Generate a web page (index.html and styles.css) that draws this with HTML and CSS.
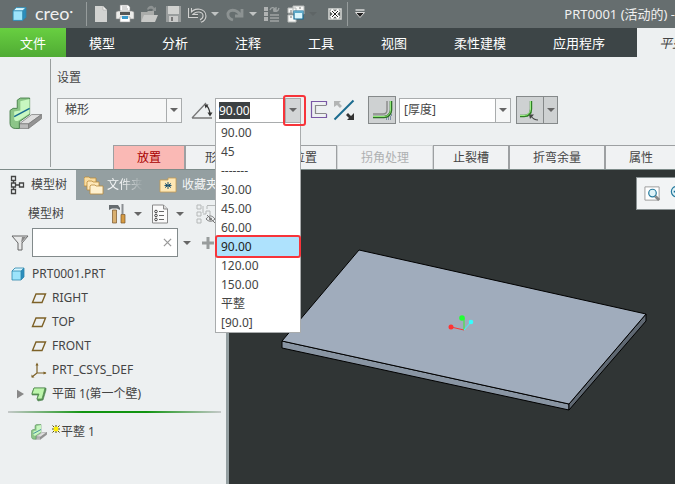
FILE: index.html
```html
<!DOCTYPE html>
<html lang="zh-CN">
<head>
    <meta charset="UTF-8">
    <meta name="viewport" content="width=device-width, initial-scale=1.0">
    <title>PRT0001 (活动的)</title>
    <link rel="stylesheet" href="styles.css">
</head>
<body>
    <!-- shared symbols -->
    <svg class="symbols" aria-hidden="true">
        <symbol id="caret" viewBox="0 0 8 4"><path d="M0 0h8L4 4z" fill="currentColor"/></symbol>
        <symbol id="cube" viewBox="0 0 14 14">
            <path d="M1 4l3-3h9v9l-3 3H1z" fill="#2c8ebd"/>
            <path d="M1 4l3-3h9l-3 3z" fill="#d5f6ff"/>
            <path d="M1 4h9v9H1z" fill="#9ce4fb"/>
            <path d="M1 4l3-3h9v9l-3 3H1zM1 4h9v9M10 4l3-3" fill="none" stroke="#2c86ad" stroke-width=".8"/>
        </symbol>
        <symbol id="plane" viewBox="0 0 16 12"><path d="M5 2h9.500L11 10.500H1.500z" fill="none" stroke="#7d6127" stroke-width="1.400"/></symbol>
        <symbol id="flatwall" viewBox="0 0 32 32">
            <path d="M10 26L22 17h9.500L19 26z" fill="#dedede" stroke="#777" stroke-width=".7"/>
            <path d="M10 26h9v4.500h-9z" fill="#bbb" stroke="#777" stroke-width=".7"/>
            <path d="M19 26l12.500-9v4L19 30.500z" fill="#939393" stroke="#777" stroke-width=".7"/>
            <path d="M1 13l3-2h4V3l3-2h9v16l-10 7v6.500H6c-3 0-5-2-5-5z" fill="#8cc588" stroke="#46804a" stroke-width=".9"/>
            <path d="M5 14l6-1V4l9-2v14L9 23c-2 1-4 0-4-2z" fill="#c8f7c0"/>
            <path d="M5 19l15-8" stroke="#166c91" stroke-width="1.500"/>
        </symbol>
    </svg>

    <header class="titlebar">
        <svg class="logo" viewBox="0 0 14 14"><use href="#cube"/></svg>
        <span class="brand">creo<sup>•</sup></span>
        <div class="quick-access">
            <button class="tool" aria-label="新建">
                <svg viewBox="0 0 20 20"><path d="M4 2h8l4 4v12H4z" fill="#d2d3d1"/><path d="M12 2v4h4z" fill="#f4f4f2" stroke="#aaa" stroke-width=".6"/></svg>
            </button>
            <button class="tool" aria-label="打印">
                <svg viewBox="0 0 20 20"><path d="M5 1h8l2 2v5H5z" fill="#fff" stroke="#888" stroke-width=".6"/><path d="M7 3h5M7 5h6" stroke="#999" stroke-width=".8"/><path d="M1 8l2-1h14l2 1v7H1z" fill="#ececea" stroke="#888" stroke-width=".6"/><path d="M5 8h10v3H5z" fill="#555"/><path d="M5 13h10v5H5z" fill="#fff" stroke="#999" stroke-width=".6"/><path d="M7 12h6v3H7z" fill="#3a99cc"/></svg>
            </button>
            <button class="tool" aria-label="打开">
                <svg viewBox="0 0 20 20"><path d="M2 8h6l1-1h6v10H2z" fill="#aaacaa"/><path d="M5 11h14l-3 7H2z" fill="#c8c9c7"/><path d="M8 5c2-4 6-4 7-1l2-1v4h-4l1-1c-1-2-4-1-5 0z" fill="#8d9292"/></svg>
            </button>
            <button class="tool" aria-label="保存">
                <svg viewBox="0 0 20 20"><path d="M3 2h15v16H3z" fill="#999d9d"/><path d="M5 2h11v8H5z" fill="#d0d1cf"/><path d="M6 12h9v6H6z" fill="#c8c9c8"/><path d="M8 13h2v4H8z" fill="#777"/></svg>
            </button>
            <button class="tool" aria-label="撤消">
                <svg viewBox="0 0 20 20"><path d="M3 4v8h8M3.500 11c5-7 14-5 14 1 0 2-1.500 4-4 5" fill="none" stroke="#d0d1d0" stroke-width="4"/><path d="M3 4v8h8M3.500 11c5-7 14-5 14 1 0 2-1.500 4-4 5" fill="none" stroke="#5d6464" stroke-width="1.800"/></svg>
            </button>
            <button class="tool-caret" aria-label="撤消列表"><svg class="caret"><use href="#caret"/></svg></button>
            <button class="tool tool-redo" aria-label="重做">
                <svg viewBox="0 0 20 20"><path d="M17 5v7h-7M16 12C12 4 2 5 3 11c0 3 2 4 5 5" fill="none" stroke="#8c9292" stroke-width="2.800"/></svg>
            </button>
            <button class="tool-caret" aria-label="重做列表"><svg class="caret"><use href="#caret"/></svg></button>
            <button class="tool" aria-label="重新生成">
                <svg viewBox="0 0 20 20"><path d="M3 3h4v4H3zM3 8h4v4H3zM3 13h4v4H3z" fill="#b0b3b3"/><path d="M9 11h9M9 14h9M9 17h9" stroke="#a0a4a4" stroke-width="1.300"/><path d="M9 6c1-3 4-3 5-1M18 4c-1 4-4 4-5 2M12 6h3V3M15 5h-2v3" fill="none" stroke="#9da2a2" stroke-width="1.300"/></svg>
            </button>
            <button class="tool" aria-label="窗口">
                <svg viewBox="0 0 20 20"><path d="M8 2h11v8H8zM3 4h8v5H3zM3 11h8v7H3z" fill="#f6f7f5" stroke="#b6b9b8"/><path d="M6 6v3M14 4h2M5 13h2" stroke="#777"/><path d="M9 7h9v8H9z" fill="#d9f5fc" stroke="#176c95" stroke-width="1.200"/><path d="M9 7h9v2H9z" fill="#5ba9c9"/></svg>
            </button>
            <button class="tool-caret tool-caret-dim" aria-label="窗口列表"><svg class="caret"><use href="#caret"/></svg></button>
            <button class="tool tool-close" aria-label="关闭">
                <svg viewBox="0 0 20 20"><path d="M4 5h12v10H4z" fill="#555b5b" stroke="#d8dad8" stroke-width="1.500"/><path d="M6 6l8 8M14 6l-8 8" stroke="#fff" stroke-width="3.400"/><path d="M7 7l6 6M13 7l-6 6" stroke="#222" stroke-width="1"/></svg>
            </button>
        </div>
        <button class="tool" aria-label="自定义">
            <svg viewBox="0 0 20 20"><path d="M5.500 6h9" stroke="#eee" stroke-width="1.200"/><path d="M5.500 8.500h9L10 13.500z" fill="#222" stroke="#ddd"/></svg>
        </button>
        <span class="doc-title">PRT0001 (活动的) -</span>
    </header>

    <nav class="menu">
        <a class="menu-file" href="#">文件</a>
        <a href="#">模型</a>
        <a href="#">分析</a>
        <a href="#">注释</a>
        <a href="#">工具</a>
        <a href="#">视图</a>
        <a href="#">柔性建模</a>
        <a href="#">应用程序</a>
        <a class="menu-active" href="#">平整</a>
    </nav>

    <section class="ribbon">
        <div class="ribbon-icon"><svg viewBox="0 0 32 32"><use href="#flatwall"/></svg></div>
        <div class="ribbon-body">
            <h2>设置</h2>
            <div class="controls">
                <div class="combo combo-shape">
                    <select aria-label="形状"><option>梯形</option></select>
                    <span class="combo-arrow"><svg class="caret"><use href="#caret"/></svg></span>
                </div>
                <svg class="angle-icon" viewBox="0 0 24 24"><path d="M2 20L16 5M2 20h20" fill="none" stroke="#777" stroke-width="1.300"/><path d="M16 7c3 3 4 6 4 10" fill="none" stroke="#333" stroke-width="1.200"/><path d="M14.500 6.500l4 0-3 4zM17.500 14.500h5l-2.500 4z" fill="#333"/></svg>
                <div class="combo combo-angle">
                    <input type="text" id="angle" value="90.00" aria-label="角度">
                    <button class="combo-arrow combo-arrow-on" aria-label="角度列表"><svg class="caret"><use href="#caret"/></svg></button>
                    <span class="mark mark-arrow"></span>
                    <ul class="angle-list" role="listbox">
                        <li role="option">90.00</li>
                        <li role="option">45</li>
                        <li role="option">-------</li>
                        <li role="option">30.00</li>
                        <li role="option">45.00</li>
                        <li role="option">60.00</li>
                        <li role="option" class="current" aria-selected="true">90.00<span class="mark mark-row"></span></li>
                        <li role="option">120.00</li>
                        <li role="option">150.00</li>
                        <li role="option">平整</li>
                        <li role="option">[90.0]</li>
                    </ul>
                </div>
                <button class="ctl ctl-first" aria-label="草绘">
                    <svg viewBox="0 0 24 24"><path d="M18.500 7V3.500h-15v16h15V16" fill="none" stroke="#7a58a5" stroke-width="1.200"/><path d="M18.500 7.500h-11v8h11" fill="none" stroke="#8a8a8a" stroke-width="1.200"/></svg>
                </button>
                <button class="ctl" aria-label="反向">
                    <svg viewBox="0 0 24 24"><path d="M2.500 21.500l19-19" stroke="#1b6b8f" stroke-width="2"/><path d="M2 3h7L7 5l3 3-2 2-3-3-3 2z" fill="#b3b5b5"/><path d="M22 22h-7l2-2-3-3 2-2 3 3 3-3z" fill="#333"/></svg>
                </button>
                <button class="toggle" aria-label="厚度侧" aria-pressed="true">
                    <svg viewBox="0 0 26 26"><path d="M4 17h10c3 0 4-2 4-4V4" fill="none" stroke="#888" stroke-width="1.400"/><path d="M17 22h6M17 20h6M20 18h3" stroke="#2a4f78" stroke-dasharray="1 1"/><path d="M4 20h11c4 0 7-3 7-7V4" fill="none" stroke="#2f7028" stroke-width="2.600"/><path d="M4 19.500h11c4 0 6.500-3 6.500-6.500V4" fill="none" stroke="#8eea76"/></svg>
                </button>
                <div class="combo combo-thick">
                    <select aria-label="厚度"><option>[厚度]</option></select>
                    <span class="combo-arrow"><svg class="caret"><use href="#caret"/></svg></span>
                </div>
                <div class="split">
                    <button aria-label="折弯半径">
                        <svg viewBox="0 0 26 26"><path d="M3 19h4c5 0 7-3 7-7V4" fill="none" stroke="#2f8025" stroke-width="2.400"/><path d="M3 18.500h4c4 0 6.500-3 6.500-6.500V4" fill="none" stroke="#9bee85"/><path d="M21 23c-3 0-5-1-7-4" fill="none" stroke="#444" stroke-width="1.200"/><path d="M12 17.500h5l-4 4.500z" fill="#444"/></svg>
                    </button>
                    <button class="split-arrow" aria-label="折弯半径列表"><svg class="caret"><use href="#caret"/></svg></button>
                </div>
            </div>
            <div class="subtabs">
                <button class="wide alert">放置</button>
                <button>形状</button>
                <button>折弯位置</button>
                <button class="wide" disabled>拐角处理</button>
                <button>止裂槽</button>
                <button class="wide">折弯余量</button>
                <button class="wide">属性</button>
            </div>
        </div>
    </section>

    <main class="workspace">
        <aside class="sidebar">
            <div class="side-tabs">
                <button class="side-tab side-tab-on">
                    <svg viewBox="0 0 20 20"><path d="M3.500 1.500h4v4h-4zM3.500 8h4v4h-4zM3.500 14.500h4v4h-4zM11.500 8h4v4h-4zM5.500 6v2M5.500 12v2M7.500 10h4" fill="none" stroke="#444" stroke-width="1.300"/></svg>模型树
                </button>
                <button class="side-tab side-tab-folder">
                    <svg viewBox="0 0 20 20"><g stroke="#b98a3b" stroke-width=".8"><path d="M0 3l1-1h4l1 1h6v8H0z" fill="#f9dca0"/><path d="M3 7l1-1h4l1 1h6v8H3z" fill="#fde7b8"/><path d="M6 11l1-1h4l1 1h7v8H6z" fill="#fff1cf"/></g></svg><span class="fade">文件夹</span>
                </button>
                <button class="side-tab side-tab-fav">
                    <svg viewBox="0 0 20 20"><path d="M1 5h8V3h8v14H1z" fill="#fde7b5" stroke="#c39a51" stroke-width=".8"/><path d="M9 7v7M6 8.500l6 4M12 8.500l-6 4M5.500 10.500h7" stroke="#1c5270"/></svg>收藏夹
                </button>
            </div>
            <div class="side-head">
                <h3>模型树</h3>
                <button class="tool" aria-label="设置">
                    <svg viewBox="0 0 20 20"><path d="M4.500 6h4v13h-4z" fill="#d9b070" stroke="#775529" stroke-width=".7"/><path d="M1 1h9l2 3v2L9 4.500H4L1 6z" fill="#666c70"/><path d="M14.500 0v10" stroke="#8b8f92" stroke-width="2"/><path d="M13 10.500h4v8.500h-4z" fill="#d79c43" stroke="#775529" stroke-width=".7"/></svg>
                </button>
                <button class="tool-caret" aria-label="设置列表"><svg class="caret"><use href="#caret"/></svg></button>
                <button class="tool tool-show" aria-label="显示">
                    <svg viewBox="0 0 20 20"><path d="M2.500 1h11l4 4v14h-15z" fill="#fafafa" stroke="#888"/><path d="M13.500 1v4h4" fill="#ddd" stroke="#888"/><circle cx="6" cy="7.500" r="1.300" fill="none" stroke="#444"/><circle cx="6" cy="11.500" r="1.300" fill="none" stroke="#444"/><circle cx="6" cy="15.500" r="1.300" fill="none" stroke="#444"/><path d="M9 7.500h5M9 11.500h5M9 15.500h5" stroke="#666"/></svg>
                </button>
                <button class="tool-caret" aria-label="显示列表"><svg class="caret"><use href="#caret"/></svg></button>
                <button class="tool tool-hide" aria-label="隐藏">
                    <svg viewBox="0 0 20 20"><path d="M1 1h4v4H1zM1 8h4v4H1zM1 15h4v4H1zM7 10h3V7h4v5M7 2v7M11 2v3M11 1.500h8" fill="none" stroke="#b5b8b8"/><path d="M10 15c3-4 6-4 9 0-3 3-6 3-9 0zM11 11l8 8" fill="none" stroke="#777"/><circle cx="14.500" cy="15" r="1.500" fill="#777"/></svg>
                </button>
            </div>
            <div class="search">
                <svg class="funnel" viewBox="0 0 18 18"><path d="M1 2h16l-6 7v7H7V9z" fill="#e9eaea" stroke="#666"/><path d="M10 9l5-6h-4z" fill="#888"/></svg>
                <div class="search-box">
                    <input type="text" aria-label="搜索">
                    <button aria-label="清除"><svg viewBox="0 0 10 10"><path d="M1 1l8 8M9 1L1 9" stroke="#999" stroke-width="1.400"/></svg></button>
                </div>
                <button class="tool-caret" aria-label="搜索选项"><svg class="caret"><use href="#caret"/></svg></button>
                <button class="add" aria-label="添加"><svg viewBox="0 0 12 12"><path d="M6 0v12M0 6h12" stroke="#989c9c" stroke-width="3"/></svg></button>
            </div>
            <ul class="tree">
                <li class="root"><svg viewBox="0 0 14 14"><use href="#cube"/></svg>PRT0001.PRT</li>
                <li><svg viewBox="0 0 16 12"><use href="#plane"/></svg>RIGHT</li>
                <li><svg viewBox="0 0 16 12"><use href="#plane"/></svg>TOP</li>
                <li><svg viewBox="0 0 16 12"><use href="#plane"/></svg>FRONT</li>
                <li><svg viewBox="0 0 16 16"><path d="M6 2v9h9M6 11l-5 4" fill="none" stroke="#7d6127" stroke-width="1.200"/><path d="M4.500 3.500L6 .5l1.500 3zM12.500 9.500l3 1.500-3 1.500zM.5 12.500v3h3z" fill="#7d6127"/></svg>PRT_CSYS_DEF</li>
                <li class="expandable"><svg class="twisty" viewBox="0 0 8 10"><path d="M0 0l8 5-8 5z" fill="#888"/></svg><svg viewBox="0 0 16 16"><path d="M3 2h12v2l-3 10-5 1-1-2 1-4H1V7z" fill="#5b8f58" stroke="#46804a" stroke-width=".6"/><path d="M3 2h11l-3 11H6l2-5H1z" fill="#bdf5ac" stroke="#538e4f" stroke-width=".8"/></svg>平面 1(第一个壁)</li>
            </ul>
            <div class="insert-line"></div>
            <ul class="tree">
                <li><svg viewBox="0 0 32 32"><use href="#flatwall"/></svg><svg class="star" viewBox="0 0 8 8"><path d="M4 0v8M0 4h8M.5.5l7 7M7.500.5l-7 7" stroke="#554f00" stroke-width="1"/><path d="M1.800 1.800h4.400v4.400H1.800z" fill="#ffef00"/></svg>平整 1</li>
            </ul>
        </aside>
        <section class="viewport">
            <svg class="model" viewBox="0 0 446 314">
                <g stroke="#000" stroke-width="1" stroke-linejoin="round">
                    <path d="M53 171l287 63v6L53 178z" fill="#8995a3"/>
                    <path d="M340 234l77-90v7l-77 89z" fill="#5f6872"/>
                    <path d="M130 80l287 64-77 90-287-63z" fill="#a0acbc"/>
                </g>
                <path d="M235 160l-13-3" stroke="#f33"/>
                <path d="M235 160v-12" stroke="#3e3"/>
                <path d="M235 160l7-8" stroke="#3ff"/>
                <circle cx="222" cy="157" r="2.500" fill="#f33"/>
                <circle cx="233" cy="148" r="2.800" fill="#2f3"/>
                <circle cx="242" cy="152" r="2.300" fill="#3ff"/>
            </svg>
            <div class="view-tools">
                <button aria-label="重新调整"><svg viewBox="0 0 18 18"><path d="M1 2h15v14H1z" fill="#fff" stroke="#999"/><circle cx="9" cy="8.500" r="4" fill="#dff3f8" stroke="#287b9e" stroke-width="1.300"/><path d="M12 12l4 4" stroke="#888" stroke-width="3"/></svg></button>
                <button aria-label="放大"><svg viewBox="0 0 18 18"><circle cx="8" cy="7" r="5.500" fill="#dff3f8" stroke="#287b9e" stroke-width="1.300"/><path d="M5 7h6M8 4v6" stroke="#126a96" stroke-width="2"/><path d="M12 11l4 4" stroke="#888" stroke-width="3"/></svg></button>
            </div>
        </section>
    </main>

    <script>
        // Open with the angle value selected, ready to be typed over
        const angle = document.getElementById('angle');
        angle.focus();
        angle.select();
    </script>
</body>
</html>
```
FILE: styles.css
```css
* {
    box-sizing: border-box;
}
body {
    margin: 0;
    height: 100vh;
    display: flex;
    flex-direction: column;
    overflow: hidden;
    font-family: "Noto Sans", "Noto Sans CJK SC", sans-serif;
    font-size: 12px;
    line-height: 16px;
    color: #444;
    background: #edf0f1;
}
button, input, select {
    font: inherit;
    color: inherit;
    margin: 0;
    padding: 0;
    border: none;
    border-radius: 0;
    background: none;
    outline: none;
}
h2, h3, ul {
    margin: 0;
    padding: 0;
    font-size: 12px;
    font-weight: normal;
    list-style: none;
}
svg {
    display: block;
    flex: none;
}
.symbols {
    position: absolute;
    width: 0;
    height: 0;
}
.caret {
    width: 8px;
    height: 4px;
    color: #666;
}

/* title bar */
.titlebar {
    flex: none;
    height: 28px;
    display: flex;
    align-items: center;
    background: #666e6f;
    color: #f0f0f0;
    white-space: nowrap;
}
.logo {
    width: 15px;
    height: 16px;
    margin-left: 12px;
}
.brand {
    width: 51px;
    margin-left: 8px;
    font-family: Lato, sans-serif;
    font-size: 18px;
    line-height: 24px;
    padding-bottom: 2px;
}
.brand sup {
    font-size: 6px;
    line-height: 1px;
    vertical-align: 6px;
}
.quick-access {
    display: flex;
    align-items: center;
    height: 24px;
    padding-left: 2px;
    border-left: 1px solid #969c9c;
    border-right: 1px solid #969c9c;
}
.tool {
    width: 24px;
    height: 24px;
    display: flex;
    align-items: center;
    justify-content: center;
}
.tool svg {
    width: 20px;
    height: 20px;
}
.tool-caret {
    width: 12px;
    height: 24px;
    display: flex;
    align-items: center;
    justify-content: center;
}
.titlebar .caret {
    color: #c0c3c3;
}
.titlebar .tool-caret-dim .caret {
    color: #5e6566;
}
.tool-redo {
    margin-left: 2px;
}
.tool-close {
    margin-left: 4px;
}
.doc-title {
    margin-left: auto;
    font-size: 13px;
}

/* main menu */
.menu {
    flex: none;
    height: 29px;
    display: flex;
    background: #3d4547;
    line-height: 30px;
    font-size: 13px;
    white-space: nowrap;
}
.menu a {
    padding: 0 24px 0 23px;
    color: #fff;
    text-decoration: none;
}
.menu .menu-file {
    padding: 0 20px;
    background: linear-gradient(#68cf41, #50ab34);
}
.menu .menu-active {
    flex: 1;
    min-width: 0;
    margin-left: 8px;
    padding: 0 0 0 22px;
    overflow: hidden;
    background: #edf0f1;
    color: #444;
    font-style: italic;
}

/* ribbon */
.ribbon {
    flex: none;
    height: 113px;
    display: flex;
    border-bottom: 1px solid #7d8b89;
}
.ribbon-icon {
    width: 51px;
    margin: 2px 0;
    padding: 38px 0 0 9px;
    border-right: 1px solid #999e9e;
}
.ribbon-icon svg {
    width: 33px;
    height: 33px;
}
.ribbon-body {
    flex: 1;
    min-width: 0;
    display: flex;
    flex-direction: column;
    padding-top: 13px;
}
.ribbon-body h2 {
    padding-left: 6px;
}
.controls {
    height: 28px;
    margin-top: 10px;
    padding-left: 6px;
    display: flex;
    align-items: center;
}
.combo {
    position: relative;
    flex: none;
    height: 25px;
    display: flex;
    border: 1px solid #a9acad;
    background: #fff;
}
.combo select {
    appearance: none;
    flex: 1;
    min-width: 0;
    padding-left: 4px;
}
.combo input {
    flex: 1;
    min-width: 0;
    height: 17px;
    margin: 3px 0 0 3px;
    line-height: 17px;
}
.combo input::selection {
    background: #3c4143;
    color: #fff;
}
.combo-arrow {
    width: 15px;
    display: flex;
    align-items: center;
    justify-content: center;
    border-left: 1px solid #a9acad;
    background: #f6f7f7;
    pointer-events: none;
}
.combo-arrow-on {
    background: #d3d5d6;
    pointer-events: auto;
}
.combo-shape {
    width: 125px;
    background: #f6f7f7;
}
.combo-shape select {
    padding-left: 7px;
}
.combo-angle {
    width: 86px;
}
.combo-thick {
    width: 112px;
    margin-left: 3px;
}
.angle-icon {
    width: 24px;
    height: 24px;
    margin: 0 1px 0 8px;
}
.angle-list {
    position: absolute;
    z-index: 2;
    top: 100%;
    left: -1px;
    right: -1px;
    border: 1px solid #a9acad;
    background: #fff;
}
.angle-list li {
    position: relative;
    height: 19px;
    padding-left: 5px;
    line-height: 19px;
}
.angle-list .current {
    background: #aee2fd;
    color: #222;
}
.mark {
    position: absolute;
    z-index: 3;
    border: 2px solid #f7343a;
    border-radius: 3px;
    pointer-events: none;
}
.mark-arrow {
    top: -4px;
    right: -6px;
    width: 23px;
    height: 31px;
}
.mark-row {
    inset: -2px -1px;
}
.ctl {
    width: 24px;
    height: 24px;
}
.ctl-first {
    margin-left: 7px;
}
.toggle {
    width: 28px;
    height: 28px;
    margin-left: 12px;
    border: 1px solid #85898a;
    background: #ced1d2;
}
.split {
    width: 42px;
    height: 28px;
    margin-left: 5px;
    display: flex;
    border: 1px solid #85898a;
    background: #ced1d2;
}
.split button {
    width: 26px;
}
.split .split-arrow {
    flex: 1;
    display: flex;
    align-items: center;
    justify-content: center;
    border-left: 1px solid #85898a;
}
.subtabs {
    margin-top: auto;
    margin-left: 62px;
    display: flex;
    overflow: hidden;
}
.subtabs button {
    flex: none;
    height: 24px;
    padding: 0 19px;
    border: 1px solid #9da0a2;
    border-bottom: none;
    background: #f0f2f3;
}
.subtabs .wide {
    padding: 0 23px;
}
.subtabs .alert {
    background: #fab9b5;
    color: #a80000;
}
.subtabs button:disabled {
    border-color: #d4d7d8;
    color: #aeb0b1;
}

/* workspace */
.workspace {
    flex: 1;
    min-height: 0;
    display: flex;
}
.sidebar {
    flex: none;
    width: 229px;
    border-right: 3px solid #949fa1;
}
.side-tabs {
    height: 30px;
    display: flex;
    overflow: hidden;
    background: #949fa1;
}
.side-tab {
    flex: none;
    display: flex;
    align-items: center;
    color: #f4f6f6;
    white-space: nowrap;
}
.side-tab svg {
    width: 20px;
    height: 20px;
    margin-right: 3px;
}
.side-tab-on {
    width: 76px;
    padding-left: 8px;
    background: #edf0f1;
    color: #444;
}
.side-tab-folder {
    width: 83px;
    padding-left: 8px;
}
.fade {
    width: 36px;
    overflow: hidden;
    mask-image: linear-gradient(90deg, #000 40%, transparent);
}
.side-head {
    height: 28px;
    display: flex;
    align-items: center;
    padding-left: 28px;
}
.side-head h3 {
    width: 78px;
}
.side-head .tool-caret {
    margin-left: 2px;
}
.side-head .tool-show {
    margin-left: 4px;
}
.side-head .tool-hide {
    margin-left: 8px;
}
.search {
    height: 29px;
    display: flex;
    align-items: center;
    padding-left: 11px;
}
.funnel {
    width: 18px;
    height: 18px;
    margin-right: 3px;
}
.search-box {
    width: 146px;
    height: 29px;
    display: flex;
    align-items: center;
    border: 1px solid #828a8b;
    background: #fff;
}
.search-box input {
    flex: 1;
    min-width: 0;
    height: 25px;
    padding-left: 4px;
}
.search-box button {
    width: 19px;
    height: 19px;
    display: flex;
    align-items: center;
    justify-content: center;
}
.search-box svg {
    width: 9px;
    height: 9px;
}
.search .tool-caret {
    margin-left: 3px;
}
.add {
    width: 12px;
    height: 12px;
    margin-left: 9px;
}
.tree {
    padding-top: 5px;
}
.tree li {
    height: 24px;
    display: flex;
    align-items: center;
    padding-left: 31px;
}
.tree li svg {
    width: 16px;
    height: 16px;
    margin-right: 5px;
}
.tree .root {
    padding-left: 11px;
}
.tree .root svg {
    width: 14px;
    height: 14px;
    margin-right: 7px;
}
.tree .expandable {
    padding-left: 17px;
}
.tree .expandable .twisty {
    width: 7px;
    height: 10px;
    margin-right: 7px;
}
.tree li .star {
    width: 8px;
    height: 8px;
    margin: 0 1px 6px 0;
}
.insert-line {
    height: 2px;
    margin: 5px 5px 2px 8px;
    background: linear-gradient(90deg, #c6c9ca, #119411 35%, #119411 65%, #c6c9ca);
}
.viewport {
    position: relative;
    flex: 1;
    min-width: 0;
    overflow: hidden;
    background: #303535;
}
.model {
    width: 446px;
    height: 314px;
}
.view-tools {
    position: absolute;
    top: 7px;
    left: 407px;
    height: 33px;
    display: flex;
    align-items: center;
    gap: 8px;
    padding: 0 8px 0 7px;
    border: 1px solid #8a9293;
    background: #f2f4f5;
}
.view-tools svg {
    width: 17px;
    height: 17px;
}
```
